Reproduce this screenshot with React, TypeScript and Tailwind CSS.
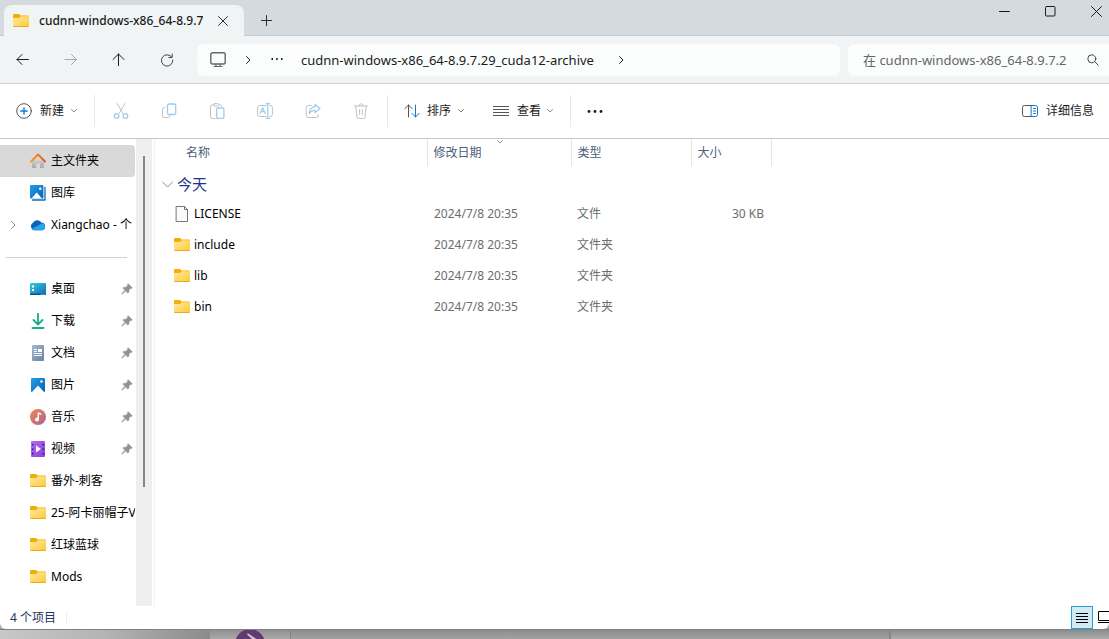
import type { ReactNode } from 'react'
import clsx from 'clsx'

type IconProps = {
  children: ReactNode
  size?: number
  className?: string
}

const Icon = ({ children, size = 16, className }: IconProps) => (
  <svg
    width={size}
    height={size}
    viewBox={`0 0 ${size} ${size}`}
    fill="none"
    stroke="currentColor"
    strokeLinecap="round"
    strokeLinejoin="round"
    aria-hidden="true"
    className={clsx('shrink-0', className)}
  >
    {children}
  </svg>
)

const FolderIcon = () => (
  <Icon>
    <path d="M0 2Q0 1 1 1H6L7.5 2.5H15.5V6H0Z" fill="#f3ac08" stroke="none" />
    <path d="M0 5H6L8 3.2H15.2Q16 3.2 16 4V13.2Q16 14 15.2 14H.8Q0 14 0 13.2Z" fill="url(#folder)" stroke="none" />
    <path d="M.8 13.5H15.2" stroke="#e2a71f" strokeWidth=".9" />
  </Icon>
)

const FileIcon = () => (
  <Icon>
    <path d="M2.5 .5H10.5L13.5 3.5V15.5H2.5Z" fill="#fafafa" stroke="#777" />
    <path d="M10.5 .5V3.5H13.5" stroke="#777" />
  </Icon>
)

const Chevron = ({ className }: { className?: string }) => (
  <Icon size={8} className={className}>
    <path d="M1.5 2.5L4 5L6.5 2.5" />
  </Icon>
)

const ChevronRight = ({ className }: { className?: string }) => (
  <Icon size={10} className={className}>
    <path d="M3.5 1.5L7 5L3.5 8.5" />
  </Icon>
)

const Dots = ({ className }: { className?: string }) => (
  <Icon className={className}>
    <g fill="currentColor" stroke="none">
      <circle cx="2" cy="8.5" r="1.4" />
      <circle cx="8" cy="8.5" r="1.4" />
      <circle cx="14" cy="8.5" r="1.4" />
    </g>
  </Icon>
)

const PinIcon = () => (
  <Icon size={12}>
    <path
      d="M7.2 .8L11.4 4.8L10.6 5.6L9.6 5.5L8 7.2L7.8 9.4L7 10.2L4.6 7.9L1.2 11.2L.7 10.8L3.9 7.2L1.8 5.1L2.6 4.3L4.9 4.2L6.6 2.6L6.4 1.6Z"
      fill="#8b959d"
      stroke="#8b959d"
      strokeWidth=".4"
    />
  </Icon>
)

const Gradients = () => (
  <svg className="absolute size-0" aria-hidden="true">
    <defs>
      <linearGradient id="folder" x1="0" y1="0" x2="1" y2="1">
        <stop offset="0" stopColor="#ffe9a3" />
        <stop offset="1" stopColor="#ffc935" />
      </linearGradient>
      <linearGradient id="blue" x1="0" y1="0" x2="1" y2="1">
        <stop offset="0" stopColor="#1ea0e8" />
        <stop offset="1" stopColor="#0a62b8" />
      </linearGradient>
      <linearGradient id="roof" x1="0" y1="0" x2="1" y2="0">
        <stop offset="0" stopColor="#f59a1c" />
        <stop offset="1" stopColor="#dc5a1e" />
      </linearGradient>
      <linearGradient id="wall" x1="0" y1="0" x2="0" y2="1">
        <stop offset="0" stopColor="#e6e6e6" />
        <stop offset="1" stopColor="#a8a8a8" />
      </linearGradient>
      <linearGradient id="desktop" x1="0" y1="0" x2="1" y2="1">
        <stop offset="0" stopColor="#35cfe0" />
        <stop offset="1" stopColor="#1068b8" />
      </linearGradient>
      <linearGradient id="paper" x1="0" y1="0" x2="1" y2="1">
        <stop offset="0" stopColor="#a5b8d0" />
        <stop offset="1" stopColor="#6683a5" />
      </linearGradient>
      <linearGradient id="music" x1="0" y1="0" x2="1" y2="1">
        <stop offset="0" stopColor="#f08a4e" />
        <stop offset="1" stopColor="#b0609c" />
      </linearGradient>
      <linearGradient id="video" x1="0" y1="0" x2="1" y2="1">
        <stop offset="0" stopColor="#b06cf5" />
        <stop offset="1" stopColor="#8a3fe0" />
      </linearGradient>
    </defs>
  </svg>
)

const HomeIcon = () => (
  <Icon>
    <path d="M2 8L8 2.5L14 8V14.2Q14 15 13.2 15H10V10.5H6.2V15H2.8Q2 15 2 14.2Z" fill="url(#wall)" stroke="none" />
    <path d="M1 8.5L8 1.5L15 8.5" stroke="url(#roof)" strokeWidth="1.9" />
  </Icon>
)

const GalleryIcon = () => (
  <Icon>
    <path d="M15 2.5V15H2.5" stroke="#0c6cc0" strokeWidth="1.3" />
    <rect width="13.4" height="13.4" rx="1" fill="url(#blue)" stroke="none" />
    <path d="M1.5 13.4L6.7 7.5L12 13.4Z" fill="#fff" stroke="none" />
    <circle cx="10.2" cy="3.8" r="1.2" fill="#fff" stroke="none" />
  </Icon>
)

const CloudIcon = () => (
  <Icon>
    <path d="M4 13.2A4 4 0 0 1 3 5.8A5 5 0 0 1 11.5 5.6A3.9 3.9 0 0 1 12.5 13.2Z" fill="#0d62b8" stroke="none" />
    <path d="M1.4 12L8 8.5L12 6.2A3.6 3.6 0 0 1 12.5 13.2H4Q2.4 13.2 1.4 12Z" fill="#28a3ec" stroke="none" />
  </Icon>
)

const DesktopIcon = () => (
  <Icon>
    <rect y="2" width="16" height="12" rx="1" fill="url(#desktop)" stroke="none" />
    <path d="M0 12.5H16V13Q16 14 15 14H1Q0 14 0 13Z" fill="#0a5494" stroke="none" />
    <path d="M2 4.5H4V6.5H2ZM2 8H4V10H2Z" fill="#fff" stroke="none" />
    <path d="M11 13.2H12M13.5 13.2H14.5" stroke="#7cc8ee" strokeWidth=".8" />
  </Icon>
)

const DownloadIcon = () => (
  <Icon>
    <path d="M8 .8V11M3.5 7L8 11.5L12.5 7M2.5 15H13.5" stroke="#1bab8c" strokeWidth="1.8" />
  </Icon>
)

const DocumentIcon = () => (
  <Icon>
    <rect x="2" width="12" height="16" rx="1" fill="url(#paper)" stroke="none" />
    <path d="M4 4.5H7M4 6.5H7M4 8.5H12M4 10.5H12" stroke="#fff" strokeLinecap="butt" />
    <rect x="8" y="4" width="4" height="3" fill="#fff" stroke="none" />
  </Icon>
)

const PictureIcon = () => (
  <Icon>
    <rect x="1" y="1" width="14" height="14" rx="1" fill="url(#blue)" stroke="none" />
    <path d="M2 15L8 8.5L14 15Z" fill="#fff" stroke="none" />
    <circle cx="11.5" cy="4.5" r="1.2" fill="#fff" stroke="none" />
  </Icon>
)

const MusicIcon = () => (
  <Icon>
    <circle cx="8" cy="8" r="8" fill="url(#music)" stroke="none" />
    <circle cx="7" cy="10.5" r="1.9" fill="#fff" stroke="none" />
    <path d="M8.3 10.5V4L10.8 5.2" stroke="#fff" strokeWidth="1.4" />
  </Icon>
)

const VideoIcon = () => (
  <Icon>
    <rect x="1" width="14" height="16" rx="1" fill="url(#video)" stroke="none" />
    <path d="M2.8 3V14M13.2 3V14" stroke="#3b1a78" strokeWidth="1.5" strokeDasharray="1.6 2.8" strokeLinecap="butt" />
    <path d="M6 4.5L11 8L6 11.5Z" fill="#fff" stroke="none" />
  </Icon>
)

type Place = {
  name: string
  icon: ReactNode
  active?: boolean
  expandable?: boolean
  pinned?: boolean
}

const topPlaces: Place[] = [
  { name: '主文件夹', icon: <HomeIcon />, active: true },
  { name: '图库', icon: <GalleryIcon /> },
  { name: 'Xiangchao - 个', icon: <CloudIcon />, expandable: true }
]

const quickPlaces: Place[] = [
  { name: '桌面', icon: <DesktopIcon />, pinned: true },
  { name: '下载', icon: <DownloadIcon />, pinned: true },
  { name: '文档', icon: <DocumentIcon />, pinned: true },
  { name: '图片', icon: <PictureIcon />, pinned: true },
  { name: '音乐', icon: <MusicIcon />, pinned: true },
  { name: '视频', icon: <VideoIcon />, pinned: true },
  { name: '番外-刺客', icon: <FolderIcon /> },
  { name: '25-阿卡丽帽子V', icon: <FolderIcon /> },
  { name: '红球蓝球', icon: <FolderIcon /> },
  { name: 'Mods', icon: <FolderIcon /> }
]

const PlaceItem = ({ place }: { place: Place }) => (
  <li>
    <a
      href="#"
      className={clsx(
        'flex h-8 items-center rounded-r-sm text-black',
        place.active && 'bg-[#d9d9d9]'
      )}
    >
      <span className="flex w-[30px] shrink-0 pl-2 text-[#888]">
        {place.expandable && <ChevronRight />}
      </span>
      {place.icon}
      <span className="ml-[5px] flex-1 overflow-hidden text-[12px] whitespace-nowrap">
        {place.name}
      </span>
      {place.pinned && (
        <span className="mr-0.5">
          <PinIcon />
        </span>
      )}
    </a>
  </li>
)

const Sidebar = () => (
  <nav className="flex w-[152px] shrink-0">
    <div className="min-w-0 flex-1 pt-1.5 pr-px">
      <ul>
        {topPlaces.map((place) => (
          <PlaceItem key={place.name} place={place} />
        ))}
      </ul>
      <hr className="mt-4 mr-2 mb-[15px] ml-1.5 border-[#d0d0d0]" />
      <ul>
        {quickPlaces.map((place) => (
          <PlaceItem key={place.name} place={place} />
        ))}
      </ul>
    </div>
    <div className="flex w-4 justify-center bg-[#efefef] pt-[17px]">
      <div className="h-[331px] w-0.5 bg-[#858585]" />
    </div>
  </nav>
)

type Entry = {
  name: string
  date: string
  type: string
  size?: string
}

const entries: Entry[] = [
  { name: 'LICENSE', date: '2024/7/8 20:35', type: '文件', size: '30 KB' },
  { name: 'include', date: '2024/7/8 20:35', type: '文件夹' },
  { name: 'lib', date: '2024/7/8 20:35', type: '文件夹' },
  { name: 'bin', date: '2024/7/8 20:35', type: '文件夹' }
]

const FileTable = () => (
  <main className="ml-0.5 flex-1 overflow-hidden border-l border-[#f2f2f2]">
    <table className="w-[616px] table-fixed text-left text-[12px] text-[#6d6d6d]">
      <colgroup>
        <col className="w-[272px]" />
        <col className="w-[144px]" />
        <col className="w-[120px]" />
        <col className="w-[80px]" />
      </colgroup>
      <thead>
        <tr className="h-[27px] text-[#4c607a] *:border-r *:border-[#e5e5e5] *:p-0 *:font-normal">
          <th className="pl-[31px]!">名称</th>
          <th className="relative pl-1.5!" aria-sort="descending">
            修改日期
            <Chevron className="absolute -top-px left-[68px] text-[#888]" />
          </th>
          <th className="pl-1.5!">类型</th>
          <th className="pl-1.5!">大小</th>
        </tr>
      </thead>
      <tbody>
        <tr className="h-8">
          <th colSpan={4} className="p-0 pl-[7px] font-normal">
            <button className="flex items-center gap-1 pt-1 text-[15px] leading-5 text-[#1e3287]">
              <Icon size={11} className="text-[#888]">
                <path d="M.5 3L5.5 8L10.5 3" />
              </Icon>
              今天
            </button>
          </th>
        </tr>
        {entries.map((entry) => (
          <tr key={entry.name} className="h-[31px]">
            <td className="p-0 pl-[19px]">
              <span className="flex items-center gap-1 text-black">
                {entry.size ? <FileIcon /> : <FolderIcon />}
                {entry.name}
              </span>
            </td>
            <td className="p-0 pl-[7px]">{entry.date}</td>
            <td className="p-0 pl-1.5">{entry.type}</td>
            <td className="p-0 pr-[7px] text-right">{entry.size}</td>
          </tr>
        ))}
      </tbody>
    </table>
  </main>
)

const TitleBar = () => (
  <header className="flex h-9 shrink-0 border-b border-[#c5cbce] bg-[#d3dbde] pl-1">
    <div className="mt-[5px] -mb-px flex w-60 shrink-0 items-center rounded-t-lg bg-[#f0f4f5] pl-[9px]">
      <FolderIcon />
      <span className="ml-2.5 w-[164px] overflow-hidden text-[12px] font-medium whitespace-nowrap">
        cudnn-windows-x86_64-8.9.7.29_cuda12-archive
      </span>
      <button aria-label="关闭标签页" className="ml-3.5 p-px">
        <Icon size={10}>
          <path d="M.5 .5L9.5 9.5M9.5 .5L.5 9.5" strokeWidth=".9" />
        </Icon>
      </button>
    </div>
    <button aria-label="新建标签页" className="ml-4 pt-1">
      <Icon size={12}>
        <path d="M6.5 1.5V11.5M1.5 6.5H11.5" strokeWidth=".9" />
      </Icon>
    </button>
    <div className="-mr-2.5 ml-auto flex h-[22px] *:flex *:w-[46px] *:items-center *:justify-center">
      <button aria-label="最小化">
        <Icon size={11}>
          <path d="M.5 5.5H10.5" />
        </Icon>
      </button>
      <button aria-label="最大化">
        <Icon size={11}>
          <rect x=".5" y=".5" width="9.5" height="9.5" rx="1" />
        </Icon>
      </button>
      <button aria-label="关闭">
        <Icon size={11}>
          <path d="M.5 .5L10.5 10.5M10.5 .5L.5 10.5" />
        </Icon>
      </button>
    </div>
  </header>
)

const AddressBar = () => (
  <div className="flex h-12 shrink-0 items-center gap-2 border-b border-[#cfd4d6] bg-[#f0f4f5]">
    <div className="flex w-[189px] shrink-0 gap-8 pl-[15px]">
      <button aria-label="后退">
        <Icon>
          <path d="M13.5 7.5H2M7 2.5L2 7.5L7 12.5" />
        </Icon>
      </button>
      <button aria-label="前进" className="text-[#a3a7a8]">
        <Icon>
          <path d="M2 7.5H13.5M8.5 2.5L13.5 7.5L8.5 12.5" />
        </Icon>
      </button>
      <button aria-label="向上">
        <Icon>
          <path d="M7.5 13.5V2M2 7.5L7.5 2L13 7.5" />
        </Icon>
      </button>
      <button aria-label="刷新">
        <Icon>
          <path d="M12.8 5.2A5.7 5.7 0 1 0 13.8 8M13.2 2V5.5H9.8" stroke="#444" />
        </Icon>
      </button>
    </div>
    <div className="flex h-8 min-w-0 flex-1 items-center rounded-md bg-[#fbfdfd] pl-[13px]">
      <Icon className="text-[#666]">
        <rect x=".8" y=".8" width="14.4" height="11.2" rx="1.8" strokeWidth="1.4" />
        <path d="M6 12.5V14.5M10 12.5V14.5M4 14.5H12" strokeWidth="1.2" />
      </Icon>
      <ChevronRight className="ml-[17px]" />
      <button aria-label="更多位置" className="ml-[17px]">
        <Icon size={14}>
          <path d="M1.5 6H3M6.2 6H7.7M11 6H12.5" strokeWidth="1.8" strokeLinecap="butt" />
        </Icon>
      </button>
      <button className="ml-[17px] overflow-hidden text-[13px] leading-5 whitespace-nowrap">
        cudnn-windows-x86_64-8.9.7.29_cuda12-archive
      </button>
      <ChevronRight className="ml-[22px]" />
    </div>
    <div className="flex h-8 w-[261px] shrink-0 items-center rounded-l-md bg-[#fbfdfd] pl-[15px]">
      <input
        type="text"
        aria-label="搜索"
        placeholder="在 cudnn-windows-x86_64-8.9.7.29_cuda12-archive 中搜索"
        className="w-[204px] text-[13px] leading-5 outline-none placeholder:text-[#666]"
      />
      <Icon size={12} className="ml-5 text-[#444]">
        <circle cx="4.8" cy="4.8" r="4" />
        <path d="M7.8 7.8L11.2 11.2" />
      </Icon>
    </div>
  </div>
)

const Separator = () => <div className="h-8 w-px bg-[#e8e8e8]" />

const tools: { label: string; icon: ReactNode }[] = [
  {
    label: '剪切',
    icon: (
      <>
        <path d="M4 .5L10.2 11M12 .5L5.8 11" />
        <g stroke="#9cccf0" strokeWidth="1.3">
          <circle cx="3.6" cy="13" r="2.3" />
          <circle cx="12.4" cy="13" r="2.3" />
        </g>
      </>
    )
  },
  {
    label: '复制',
    icon: (
      <>
        <path d="M4 4.5H3.2Q1.5 4.5 1.5 6.2V12.8Q1.5 14.5 3.2 14.5H7Q8.7 14.5 9.2 12.5" />
        <rect x="6.5" y="1" width="8.2" height="10.5" rx="1.6" stroke="#9cccf0" strokeWidth="1.3" />
      </>
    )
  },
  {
    label: '粘贴',
    icon: (
      <>
        <path d="M5 1.8H2.8Q1.5 1.8 1.5 3.1V14.2Q1.5 15.5 2.8 15.5H6M10.5 1.8H11.3Q12.6 1.8 12.6 3.2" />
        <rect x="4.8" y=".6" width="5" height="2.4" rx="1.1" />
        <rect x="7.7" y="5" width="7.2" height="10.5" rx="1.2" stroke="#9cccf0" strokeWidth="1.3" />
      </>
    )
  },
  {
    label: '重命名',
    icon: (
      <>
        <path d="M9 2.5H2.8Q.6 2.5 .6 4.7V11.3Q.6 13.5 2.8 13.5H9M12.6 2.5H13.2Q15.4 2.5 15.4 4.7V11.3Q15.4 13.5 13.2 13.5H12.6" />
        <path d="M3 10.5L5.6 4.8L8.2 10.5M3.9 8.7H7.3M10.8 .6V15.4M9 .6H12.6M9 15.4H12.6" stroke="#9cccf0" strokeWidth="1.2" />
      </>
    )
  },
  {
    label: '共享',
    icon: (
      <>
        <path d="M6 2.5H3.4Q1.2 2.5 1.2 4.7V12.3Q1.2 14.5 3.4 14.5H11Q13.2 14.5 13.2 12.3V11.5" />
        <path d="M10 1.5L15 5.5L10 9.5V7.4Q6 7.2 4.2 10.6Q4.6 4.2 10 3.7Z" stroke="#9cccf0" strokeWidth="1.2" />
      </>
    )
  },
  {
    label: '删除',
    icon: (
      <path d="M1.5 3H14.5M2.8 3L4 14.2Q4.1 15.4 5.3 15.4H10.7Q11.9 15.4 12 14.2L13.2 3M5.8 3Q5.8 .8 8 .8Q10.2 .8 10.2 3M6.6 6.5V11.5M9.4 6.5V11.5" />
    )
  }
]

const Toolbar = () => (
  <div className="flex h-[55px] shrink-0 items-center border-b border-[#c6c9cb] text-[12px]">
    <button className="flex items-center pl-4">
      <Icon>
        <circle cx="8" cy="8" r="7.3" stroke="#555" />
        <path d="M8 4.8V11.2M4.8 8H11.2" stroke="#0f78d0" strokeWidth="1.3" />
      </Icon>
      <span className="ml-2">新建</span>
      <Chevron className="ml-1.5 text-[#888]" />
    </button>
    <div className="ml-4">
      <Separator />
    </div>
    <div className="ml-[18px] flex gap-8 text-[#c2c2c2]">
      {tools.map((tool) => (
        <button key={tool.label} aria-label={tool.label} disabled>
          <Icon>{tool.icon}</Icon>
        </button>
      ))}
    </div>
    <div className="ml-[18px]">
      <Separator />
    </div>
    <button className="ml-4 flex items-center">
      <Icon>
        <path d="M4.5 14V2M.8 5.7L4.5 2L8.2 5.7" stroke="#555" />
        <path d="M11.5 2V14M7.8 10.3L11.5 14L15.2 10.3" stroke="#0f78d0" />
      </Icon>
      <span className="ml-[7px]">排序</span>
      <Chevron className="ml-1.5 text-[#888]" />
    </button>
    <button className="ml-7 flex items-center">
      <Icon>
        <path d="M0 3.5H16M0 6.5H16M0 9.5H16M0 12.5H16" stroke="#555" strokeLinecap="butt" />
      </Icon>
      <span className="ml-2">查看</span>
      <Chevron className="ml-[5px] text-[#888]" />
    </button>
    <div className="ml-4">
      <Separator />
    </div>
    <button aria-label="更多" className="ml-4">
      <Dots />
    </button>
    <button className="mr-[15px] ml-auto flex items-center gap-2">
      <Icon>
        <path d="M9.5 2.5H2.5Q.5 2.5 .5 4.5V11.5Q.5 13.5 2.5 13.5H9.5" stroke="#555" />
        <path d="M9.5 2.5H13.5Q15.5 2.5 15.5 4.5V11.5Q15.5 13.5 13.5 13.5H9.5ZM11.5 5.5H13.5M11.5 8H13.5M11.5 10.5H13.5" stroke="#0f78d0" />
      </Icon>
      详细信息
    </button>
  </div>
)

const StatusBar = () => (
  <footer className="flex h-[23px] shrink-0 items-center text-[12px] text-[#24365c]">
    <span className="pl-2.5">4 个项目</span>
    <div className="ml-2.5 h-3 w-px bg-[#efefef]" />
    <div className="ml-auto flex h-full items-center text-black">
      <button
        aria-label="详细信息视图"
        className="flex h-full w-[22px] items-center justify-center border border-[#26a0da] bg-[#d2eaf5]"
      >
        <Icon size={12}>
          <path d="M0 1.5H12M0 4.5H12M0 7.5H12M0 10.5H12" strokeLinecap="butt" />
        </Icon>
      </button>
      <button aria-label="大图标视图" className="w-4 overflow-hidden pl-[5px]">
        <Icon size={14}>
          <path d="M.5 .5H13.5V9.5H.5ZM0 11.5H14" strokeLinecap="butt" />
        </Icon>
      </button>
    </div>
  </footer>
)

const Backdrop = () => (
  <div className="flex h-2.5 shrink-0 border-t border-[#808080] bg-[#a5a5a5]">
    <div className="w-[209px] bg-linear-to-r from-[#c8c8c8] via-[#b4b4b4] to-[#8c8c8c]" />
    <div className="flex w-[82px] justify-center overflow-hidden border-x border-l-[#8a8a8a] border-r-[#888] bg-linear-to-b from-[#909090] to-[#aaaaaa]">
      <svg width="30" height="9" viewBox="0 0 30 9" aria-hidden="true">
        <circle cx="15" cy="14" r="15" fill="#5f3a70" />
        <path d="M12.5 3V5L17 9H21.5Z" fill="#cfc4d4" />
      </svg>
    </div>
    <div className="flex-1 border-r-2 border-[#888] bg-linear-to-b from-[#8c8c8c] to-[#a2a2a2]" />
    <div className="w-[218px] bg-linear-to-b from-[#8c8c8c] to-[#adadad]" />
  </div>
)

const App = () => {
  return (
    <div className="flex h-screen flex-col overflow-hidden bg-[#a5a5a5] font-['Noto_Sans','Noto_Sans_CJK_SC',sans-serif] text-[#1b1b1b]">
      <Gradients />
      <div className="flex min-h-0 flex-1 flex-col overflow-hidden rounded-b-md bg-white">
        <TitleBar />
        <AddressBar />
        <Toolbar />
        <div className="flex min-h-0 flex-1 overflow-hidden">
          <Sidebar />
          <FileTable />
        </div>
        <StatusBar />
      </div>
      <Backdrop />
    </div>
  )
}

export default App
